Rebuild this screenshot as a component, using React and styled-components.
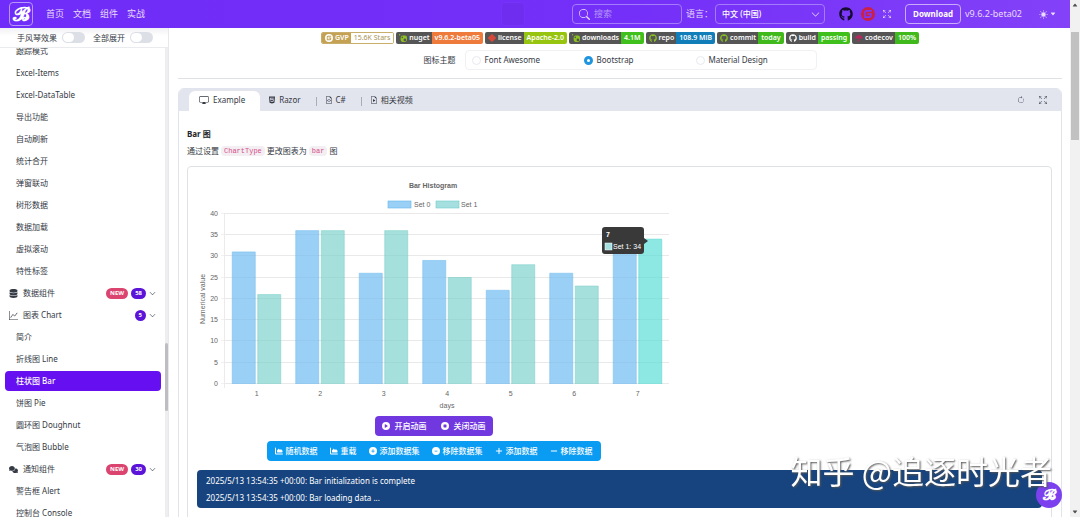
import { useState } from "react";
import styled, { createGlobalStyle } from "styled-components";
import {
  FaChartArea,
  FaComments,
  FaDatabase,
  FaGithub,
  FaHtml5,
  FaMinus,
  FaCircleMinus,
  FaCirclePlay,
  FaCirclePlus,
  FaCircleStop,
  FaDiamond,
  FaPlus,
  FaUmbrella,
} from "react-icons/fa6";
import {
  BsArrowClockwise,
  BsArrowsFullscreen,
  BsCaretDownFill,
  BsCaretUpFill,
  BsChevronDown,
  BsDisplay,
  BsFileEarmarkCode,
  BsFileEarmarkPlay,
  BsGraphUp,
  BsSearch,
  BsSunFill,
} from "react-icons/bs";
import { SiGitee, SiNuget } from "react-icons/si";

const GlobalStyle = createGlobalStyle`
  * {
    box-sizing: border-box;
  }
  body {
    margin: 0;
    overflow: hidden;
    background: #fff;
    color: #353a44;
    font-family: "Noto Sans", "Noto Sans CJK SC", sans-serif;
    font-size: 8px;
    line-height: 12px;
  }
  button, input, select {
    font: inherit;
    color: inherit;
    margin: 0;
  }
  a {
    color: inherit;
    text-decoration: none;
  }
`;

const Window = styled.div`
  display: flex;
  height: 100vh;
`;

const Page = styled.div`
  flex: 1;
  min-width: 0;
  display: flex;
  flex-direction: column;
`;

const Header = styled.header`
  display: flex;
  align-items: center;
  height: 28px;
  flex-shrink: 0;
  padding: 0 14px 0 9px;
  background: linear-gradient(90deg, #702cf8, #7430f8 60%, #8341f8);
  color: #e8dcff;
  font-size: 9px;
`;

const Logo = styled.a`
  display: flex;
  align-items: center;
  justify-content: center;
  width: 24px;
  height: 24px;
  border: 1px solid #b795fb;
  border-radius: 4px;
  color: #fff;
  font-size: 19px;
  line-height: 20px;
  font-family: "DejaVu Serif", serif;
  font-weight: 700;
  background: ${({ $faded }) => ($faded ? "#000" : "none")};
  opacity: ${({ $faded }) => ($faded ? 0.03 : 1)};
`;

const Nav = styled.nav`
  display: flex;
  gap: 9px;
  flex: 1;
  margin-left: 13px;
`;

const HeaderMark = styled.div`
  margin-right: 47px;
`;

const Search = styled.label`
  display: flex;
  align-items: center;
  gap: 4px;
  width: 110px;
  height: 20px;
  padding: 0 6px;
  border: 1px solid #a47bfb;
  border-radius: 4px;

  svg {
    width: 11px;
    height: 11px;
    flex-shrink: 0;
  }
  input {
    width: 100%;
    border: 0;
    padding: 0;
    background: none;
    outline: none;
  }
  input::placeholder {
    color: #b597fb;
    opacity: 1;
  }
`;

const LanguageLabel = styled.label`
  margin: 0 2px 0 4px;
`;

const SelectBox = styled.div`
  display: flex;
  align-items: center;
  width: 110px;
  height: 20px;
  border: 1px solid #a47bfb;
  border-radius: 4px;
  padding-right: 4px;

  select {
    flex: 1;
    appearance: none;
    border: 0;
    background: none;
    padding: 0 6px;
    font-size: 8px;
    font-weight: 500;
    color: #fff;
  }
`;

const HeaderIcons = styled.div`
  display: flex;
  align-items: center;
  gap: 8px;
  margin: 0 14px;

  a {
    display: flex;
  }
`;

const IconButton = styled.button`
  display: flex;
  align-items: center;
  gap: 2px;
  border: 0;
  padding: 0;
  background: none;
`;

const Download = styled.button`
  height: 20px;
  padding: 0 7px;
  border: 1px solid #c9adfc;
  border-radius: 4px;
  background: none;
  color: #fff;
  font-weight: 700;
  font-size: 8px;
`;

const Version = styled.span`
  margin: 0 17px 0 4px;
`;

const Body = styled.div`
  display: flex;
  flex: 1;
  min-height: 0;
`;

const Sidebar = styled.aside`
  width: 169px;
  flex-shrink: 0;
  display: flex;
  flex-direction: column;
  border-right: 1px solid #e6e8ec;
`;

const SidebarTools = styled.div`
  display: flex;
  align-items: center;
  gap: 8px;
  height: 20px;
  flex-shrink: 0;
  padding-left: 17px;
  border-bottom: 1px solid #e9ebee;
  background: linear-gradient(#f1f1f4, #fff 8px);
`;

const SwitchLabel = styled.label`
  display: flex;
  align-items: center;
  gap: 5px;

  input {
    appearance: none;
    width: 23px;
    height: 11px;
    border-radius: 6px;
    padding: 1px;
    background: #dcdfe6;
  }
  input::before {
    content: "";
    display: block;
    width: 11px;
    height: 9px;
    border-radius: 5px;
    background: #fff;
  }
  input:checked {
    background: #6610f2;
  }
  input:checked::before {
    margin-left: 10px;
  }
`;

const SidebarScroll = styled.div`
  flex: 1;
  min-height: 0;
  display: flex;
`;

const MenuViewport = styled.div`
  flex: 1;
  overflow: hidden;
  display: flex;
  flex-direction: column;
`;

const Menu = styled.ul`
  list-style: none;
  margin: -8px 4px 0 5px;
  padding: 0;
`;

const MenuLink = styled.a`
  display: flex;
  align-items: center;
  gap: 3px;
  height: 20px;
  margin: 2px 0;
  padding: 0 5px 0 ${({ $group }) => ($group ? "4px" : "11px")};
  border-radius: 4px;
  background: ${({ $active }) => ($active ? "#6610f2" : "transparent")};
  color: ${({ $active }) => ($active ? "#fff" : "inherit")};
  font-weight: ${({ $active }) => ($active ? 500 : 400)};

  li:first-child & {
    margin-top: 1px;
  }
`;

const MenuText = styled.span`
  flex: 1;
  margin-left: ${({ $group }) => ($group ? "2px" : "0")};
`;

const Pill = styled.span`
  height: 11px;
  line-height: 11px;
  padding: 0 4px;
  border-radius: 6px;
  background: ${({ $color }) => $color};
  color: #fff;
  font-size: 6px;
  font-weight: 700;
`;

const MenuTrack = styled.div`
  width: 3px;
  padding-top: 295px;
  background: #eeeef1;
`;

const MenuThumb = styled.div`
  height: 68px;
  background: #bdbdc2;
  border-radius: 2px;
`;

const Main = styled.main`
  flex: 1;
  min-width: 0;
  overflow: hidden;
  padding: 4px 8px 0 9px;
`;

const Badges = styled.div`
  display: flex;
  justify-content: center;
  gap: 2px;
`;

const Badge = styled.a`
  display: flex;
  height: 12px;
  border-radius: 2px;
  overflow: hidden;
  color: #fff;
  font-size: 7px;
  font-weight: ${({ $outlined }) => ($outlined ? 400 : 600)};
  border: ${({ $outlined }) => ($outlined ? "1px solid #c9ae6b" : "0")};
  line-height: ${({ $outlined }) => ($outlined ? "10px" : "12px")};
`;

const BadgeName = styled.span`
  display: flex;
  align-items: center;
  gap: 2px;
  padding: 0 2px 0 3px;
  font-weight: 600;
  background: ${({ $color }) => $color || "#555"};
`;

const BadgeValue = styled.span`
  padding: 0 3px;
  background: ${({ $color }) => $color};
  color: ${({ $text }) => $text || "#fff"};
`;

const ThemeRow = styled.div`
  display: flex;
  align-items: center;
  justify-content: center;
  gap: 9px;
  padding: 6px 0 8px;
  border-bottom: 1px solid #dfe1e4;
  margin-bottom: 9px;
`;

const RadioGroup = styled.div`
  display: grid;
  grid-template-columns: repeat(3, 112px);
  width: 352px;
  height: 20px;
  padding-left: 6px;
  border: 1px solid #eff1f4;
  border-radius: 4px;
`;

const Radio = styled.label`
  display: flex;
  align-items: center;
  gap: 4px;

  input {
    appearance: none;
    width: 9px;
    height: 9px;
    border: 1px solid #e6e9ee;
    border-radius: 50%;
  }
  input:checked {
    border: 3px solid #1f95e0;
  }
`;

const Card = styled.section`
  border: 1px solid #e1e4ec;
  border-radius: 6px 6px 0 0;
`;

const Tabs = styled.div`
  display: flex;
  align-items: center;
  height: 22px;
  padding: 2px 14px 0 10px;
  background: #e2e4ee;
  border-radius: 5px 5px 0 0;
`;

const Tab = styled.button`
  display: flex;
  align-items: center;
  gap: ${({ $active }) => ($active ? "4px" : "3px")};
  height: 20px;
  padding: 0 ${({ $active }) => ($active ? "15px 2px 10px" : "15px 2px 8px")};
  border: 0;
  border-radius: 6px 6px 0 0;
  background: ${({ $active }) => ($active ? "#fff" : "none")};
`;

const TabDivider = styled.span`
  width: 1px;
  height: 9px;
  background: #a9adb9;
`;

const TabTools = styled.div`
  display: flex;
  gap: 14px;
  margin-left: auto;
  padding-bottom: 2px;
  color: #555c68;
`;

const CardBody = styled.div`
  padding: 16px 9px 20px 8px;
`;

const Title = styled.h2`
  margin: 0;
  font-size: 8px;
  line-height: 14px;
  font-weight: 700;
  color: #212529;
`;

const Description = styled.p`
  display: flex;
  align-items: center;
  gap: 2px;
  margin: 4px 0 9px;

  code {
    padding: 0 3px;
    line-height: 10px;
    border-radius: 4px;
    background: #f2eef2;
    color: #d6508b;
    font-family: "Liberation Mono", monospace;
    font-size: 7px;
  }
`;

const Demo = styled.div`
  border: 1px solid #dee2e6;
  border-radius: 4px;
  padding: 8px 9px 60px;
`;

const ChartArea = styled.div`
  width: 473px;
  max-width: 100%;
  display: flex;
  flex-direction: column;
  align-items: center;
  gap: 5px;
`;

const ChartSvg = styled.svg`
  display: block;
  width: 100%;
  font-family: "Liberation Sans", Arial, sans-serif;
  font-size: 7px;
  fill: #666;
`;

const ButtonGroup = styled.div`
  display: flex;
  height: 20px;
  padding: 0 ${({ $wide }) => ($wide ? "2px" : "0")};
  border-radius: 4px;
  background: ${({ $color }) => $color};
`;

const GroupButton = styled.button`
  display: flex;
  align-items: center;
  gap: ${({ $wide }) => ($wide ? "5px" : "3px")};
  padding: 0 ${({ $wide }) => ($wide ? "7px" : "6px")};
  border: 0;
  background: none;
  color: #fff;
  font-weight: 500;
`;

const Log = styled.div`
  margin-top: 9px;
  padding: 2px 9px;
  border-radius: 4px;
  background: #17447e;
  color: #fff;
  line-height: 17px;
`;

const PageScroll = styled.div`
  width: 10px;
  flex-shrink: 0;
  display: flex;
  flex-direction: column;
  align-items: center;
  background: #f1f1f1;
  color: #505050;
  padding: 2px 0;
`;

const PageThumb = styled.div`
  width: 8px;
  height: 108px;
  margin: 24px 0 auto;
  background: #c1c1c1;
`;

const Watermark = styled.div`
  position: fixed;
  right: 28px;
  bottom: 25px;
  color: #fff;
  font-family: "Noto Sans CJK SC", sans-serif;
  font-size: 32px;
  line-height: 44px;
  text-shadow: 1px 1px 2px #555;
  white-space: nowrap;
`;

const FloatButton = styled.button`
  position: fixed;
  right: 18px;
  bottom: 9px;
  width: 26px;
  height: 26px;
  padding: 0;
  border: 0;
  border-radius: 50%;
  background: #7b41ee;
  color: #fff;
  font-family: "DejaVu Serif", serif;
  font-size: 15px;
  font-weight: 700;
`;

const menuItems = [
  { text: "跟踪模式" },
  { text: "Excel-Items" },
  { text: "Excel-DataTable" },
  { text: "导出功能" },
  { text: "自动刷新" },
  { text: "统计合开" },
  { text: "弹窗联动" },
  { text: "树形数据" },
  { text: "数据加载" },
  { text: "虚拟滚动" },
  { text: "特性标签" },
  { text: "数据组件", icon: FaDatabase, isNew: true, count: 58 },
  { text: "图表 Chart", icon: BsGraphUp, count: 5 },
  { text: "简介" },
  { text: "折线图 Line" },
  { text: "柱状图 Bar" },
  { text: "饼图 Pie" },
  { text: "圆环图 Doughnut" },
  { text: "气泡图 Bubble" },
  { text: "通知组件", icon: FaComments, isNew: true, count: 30 },
  { text: "警告框 Alert" },
  { text: "控制台 Console" },
];

const badges = [
  { name: "GVP", value: "15.6K Stars", icon: SiGitee, iconColor: "#fff", nameColor: "#c5a253", color: "#fff", text: "#a99255", outlined: true },
  { name: "nuget", value: "v9.6.2-beta05", icon: SiNuget, iconColor: "#8cc21f", color: "#ee7a3b" },
  { name: "license", value: "Apache-2.0", icon: FaDiamond, iconColor: "#d5483b", color: "#97c40f" },
  { name: "downloads", value: "4.1M", icon: SiNuget, iconColor: "#8cc21f", color: "#3fc01c" },
  { name: "repo", value: "108.9 MiB", icon: FaGithub, iconColor: "#8cc21f", color: "#117db9" },
  { name: "commit", value: "today", icon: FaGithub, iconColor: "#8cc21f", color: "#3fb91c" },
  { name: "build", value: "passing", icon: FaGithub, iconColor: "#fff", color: "#3fc01c" },
  { name: "codecov", value: "100%", icon: FaUmbrella, iconColor: "#b52a5c", color: "#3fb91c" },
];

const set0 = [31, 36, 26, 29, 22, 26, 32];
const set1 = [21, 36, 36, 25, 28, 23, 34];
const ticks = [0, 5, 10, 15, 20, 25, 30, 35, 40];

const BASE = 209;
const LEFT = 28;
const STEP = 63.5;
const yOf = (value) => BASE - value * 4.26;

const Bar = ({ x, value, fill, stroke }) => (
  <g>
    <rect x={x} y={yOf(value)} width="23" height={value * 4.26} fill={fill} />
    <path
      d={`M${x} ${BASE}V${yOf(value)}h23V${BASE}`}
      fill="none"
      stroke={stroke}
      strokeWidth="0.6"
    />
  </g>
);

const Chart = () => (
  <ChartSvg viewBox="0 0 473 236" role="img" aria-label="Bar Histogram">
    <text x="236" y="13" textAnchor="middle" fontWeight="700">
      Bar Histogram
    </text>
    <rect x="191" y="26" width="23" height="7" fill="#9ad0f5" stroke="#62b5ec" strokeWidth="0.6" />
    <text x="217" y="32">Set 0</text>
    <rect x="239" y="26" width="23" height="7" fill="#a5dfdf" stroke="#6fcccc" strokeWidth="0.6" />
    <text x="264" y="32">Set 1</text>
    {ticks.map((tick) => (
      <g key={tick}>
        <path d={`M24 ${Math.round(yOf(tick)) - 0.5}H472`} stroke="#f1f1f1" />
        <text x="21" y={yOf(tick) + 2} textAnchor="end">
          {tick}
        </text>
      </g>
    ))}
    <path d={`M${LEFT - 0.5} 38V213`} stroke="#ebebeb" />
    {set0.map((value, i) => {
      const center = LEFT + STEP * (i + 0.5);
      const hovered = i === set1.length - 1;
      return (
        <g key={i}>
          <Bar x={center - 24.5} value={value} fill="#9ad0f5" stroke="#7cc0ee" />
          <Bar
            x={center + 1}
            value={set1[i]}
            fill={hovered ? "#8de8e4" : "#a5e0dd"}
            stroke={hovered ? "#5fd6d0" : "#86d1cd"}
          />
          <text x={center} y="221" textAnchor="middle">
            {i + 1}
          </text>
        </g>
      );
    })}
    {ticks.map((tick) => (
      <path key={tick} d={`M28 ${Math.round(yOf(tick)) - 0.5}H472`} stroke="#000" strokeOpacity="0.03" />
    ))}
    <text x="250" y="233" textAnchor="middle">
      days
    </text>
    <text transform="translate(8 124) rotate(-90)" textAnchor="middle">
      Numerical value
    </text>
    <path
      d="M408 52h36a3 3 0 0 1 3 3v8l4 3-4 3v7a3 3 0 0 1-3 3h-36a3 3 0 0 1-3-3V55a3 3 0 0 1 3-3z"
      fill="#393939"
    />
    <text x="409" y="62" fill="#fff" fontWeight="700">7</text>
    <rect x="408" y="68" width="7" height="7" fill="#a5dfdf" stroke="#fff" strokeWidth="0.5" />
    <text x="416" y="74" fill="#fff">Set 1: 34</text>
  </ChartSvg>
);

const App = () => {
  const [theme, setTheme] = useState("Bootstrap");

  return (
    <Window>
      <GlobalStyle />
      <Page>
        <Header>
          <Logo href="#" aria-label="Bootstrap Blazor">𝓑</Logo>
          <Nav>
            <a href="#home">首页</a>
            <a href="#docs">文档</a>
            <a href="#components">组件</a>
            <a href="#practice">实战</a>
          </Nav>
          <HeaderMark>
            <Logo as="div" $faded aria-hidden="true" />
          </HeaderMark>
          <Search>
            <BsSearch />
            <input type="search" placeholder="搜索" aria-label="搜索" />
          </Search>
          <LanguageLabel htmlFor="language">语言：</LanguageLabel>
          <SelectBox>
            <select id="language">
              <option>中文 (中国)</option>
            </select>
            <BsChevronDown size={9} />
          </SelectBox>
          <HeaderIcons>
            <a href="#github" aria-label="GitHub"><FaGithub size={14} color="#150b31" /></a>
            <a href="#gitee" aria-label="Gitee"><SiGitee size={14} color="#c92048" /></a>
            <IconButton aria-label="全屏"><BsArrowsFullscreen size={8} /></IconButton>
          </HeaderIcons>
          <Download>Download</Download>
          <Version>v9.6.2-beta02</Version>
          <IconButton aria-label="切换主题">
            <BsSunFill size={9} />
            <BsCaretDownFill size={6} />
          </IconButton>
        </Header>
        <Body>
          <Sidebar>
            <SidebarTools>
              <SwitchLabel>
                手风琴效果
                <input type="checkbox" role="switch" />
              </SwitchLabel>
              <SwitchLabel>
                全部展开
                <input type="checkbox" role="switch" />
              </SwitchLabel>
            </SidebarTools>
            <SidebarScroll>
              <MenuViewport>
                <Menu>
                  {menuItems.map(({ text, icon: Icon, isNew, count }) => (
                    <li key={text}>
                      <MenuLink href="#menu" $group={!!Icon} $active={text === "柱状图 Bar"}>
                        {Icon && <Icon size={9} />}
                        <MenuText $group={!!Icon}>{text}</MenuText>
                        {isNew && <Pill $color="#dc4470">NEW</Pill>}
                        {count && <Pill $color="#5b14d8">{count}</Pill>}
                        {count && <BsChevronDown size={7} />}
                      </MenuLink>
                    </li>
                  ))}
                </Menu>
              </MenuViewport>
              <MenuTrack>
                <MenuThumb />
              </MenuTrack>
            </SidebarScroll>
          </Sidebar>
          <Main>
            <Badges>
              {badges.map(({ name, value, icon: Icon, iconColor, nameColor, color, text, outlined }) => (
                <Badge key={name} href="#badge" $outlined={outlined}>
                  <BadgeName $color={nameColor}>
                    <Icon size={8} color={iconColor} />
                    {name}
                  </BadgeName>
                  <BadgeValue $color={color} $text={text}>{value}</BadgeValue>
                </Badge>
              ))}
            </Badges>
            <ThemeRow>
              <span>图标主题</span>
              <RadioGroup role="radiogroup" aria-label="图标主题">
                {["Font Awesome", "Bootstrap", "Material Design"].map((name) => (
                  <Radio key={name}>
                    <input
                      type="radio"
                      name="theme"
                      checked={theme === name}
                      onChange={() => setTheme(name)}
                    />
                    {name}
                  </Radio>
                ))}
              </RadioGroup>
            </ThemeRow>
            <Card>
              <Tabs>
                <Tab $active><BsDisplay size={10} />Example</Tab>
                <Tab><FaHtml5 size={8} />Razor</Tab>
                <TabDivider />
                <Tab><BsFileEarmarkCode size={8} />C#</Tab>
                <TabDivider />
                <Tab><BsFileEarmarkPlay size={8} />相关视频</Tab>
                <TabTools>
                  <IconButton aria-label="刷新"><BsArrowClockwise size={8} /></IconButton>
                  <IconButton aria-label="全屏"><BsArrowsFullscreen size={8} /></IconButton>
                </TabTools>
              </Tabs>
              <CardBody>
                <Title>Bar 图</Title>
                <Description>
                  通过设置 <code>ChartType</code> 更改图表为 <code>bar</code> 图
                </Description>
                <Demo>
                  <ChartArea>
                    <Chart />
                    <ButtonGroup $color="#7238e0">
                      <GroupButton $wide><FaCirclePlay size={8} />开启动画</GroupButton>
                      <GroupButton $wide><FaCircleStop size={8} />关闭动画</GroupButton>
                    </ButtonGroup>
                    <ButtonGroup $color="#0a9bf3" $wide>
                      <GroupButton><FaChartArea size={8} />随机数据</GroupButton>
                      <GroupButton><FaChartArea size={8} />重载</GroupButton>
                      <GroupButton><FaCirclePlus size={8} />添加数据集</GroupButton>
                      <GroupButton><FaCircleMinus size={8} />移除数据集</GroupButton>
                      <GroupButton><FaPlus size={8} />添加数据</GroupButton>
                      <GroupButton><FaMinus size={8} />移除数据</GroupButton>
                    </ButtonGroup>
                  </ChartArea>
                  <Log>
                    <div>2025/5/13 13:54:35 +00:00: Bar initialization is complete</div>
                    <div>2025/5/13 13:54:35 +00:00: Bar loading data ...</div>
                  </Log>
                </Demo>
              </CardBody>
            </Card>
          </Main>
        </Body>
      </Page>
      <PageScroll>
        <BsCaretUpFill size={6} />
        <PageThumb />
        <BsCaretDownFill size={6} />
      </PageScroll>
      <FloatButton aria-label="Bootstrap Blazor">𝓑</FloatButton>
      <Watermark>知乎 @追逐时光者</Watermark>
    </Window>
  );
};

export default App;
